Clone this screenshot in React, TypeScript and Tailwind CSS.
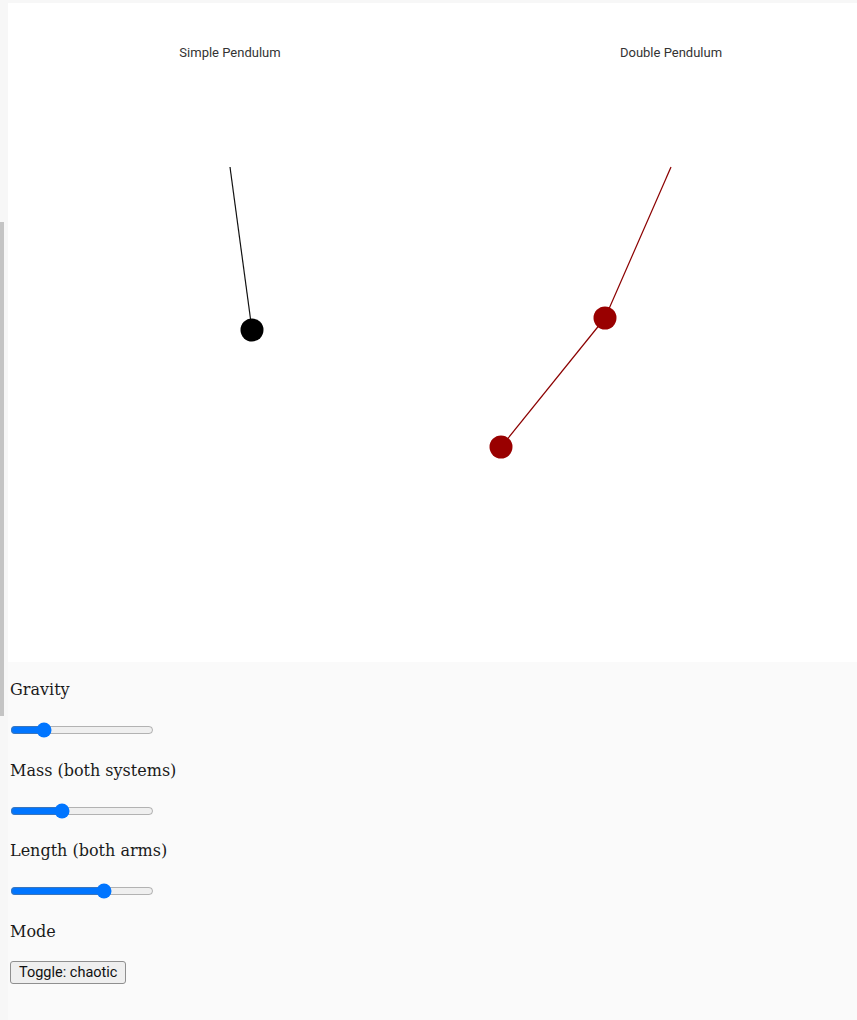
import { useState } from 'react';

const sliders = [
  { label: 'Gravity', value: 20 },
  { label: 'Mass (both systems)', value: 34 },
  { label: 'Length (both arms)', value: 67 },
];

function Canvas() {
  // svg x = page x - 8
  return (
    <div className="bg-white h-[659px] overflow-hidden">
      <svg width="880" height="659" className="block">
        <g fontFamily="Roboto, 'Liberation Sans', sans-serif" fontSize="13" fill="#333" textAnchor="middle">
          <text x="222" y="54">Simple Pendulum</text>
          <text x="663" y="54">Double Pendulum</text>
        </g>

        {/* simple */}
        <line x1="222" y1="164" x2="244" y2="327" stroke="#111" strokeWidth="1.2" />
        <circle cx="244" cy="327" r="11.5" fill="#000" />

        {/* double */}
        <line x1="663" y1="164" x2="597" y2="315" stroke="#8b0000" strokeWidth="1.2" />
        <line x1="597" y1="315" x2="493" y2="444" stroke="#8b0000" strokeWidth="1.2" />
        <circle cx="597" cy="315" r="11.5" fill="#990000" />
        <circle cx="493" cy="444" r="11.5" fill="#990000" />
      </svg>
    </div>
  );
}

export default function App() {
  const [chaotic, setChaotic] = useState(true);

  return (
    <div className="relative min-h-[1020px] bg-[#f7f7f7] pl-2 pt-[3px] font-['DejaVu_Serif',serif]">
      {/* scrollbar thumb at the left edge */}
      <div className="absolute left-0 top-[222px] w-[4px] h-[494px] bg-[#c4c4c4]" />

      <Canvas />

      <div className="bg-[#fafafa] pl-[2px] pt-[14px] pb-10 text-[#1a1a1a]">
        {sliders.map((s) => (
          <div key={s.label}>
            <div className="text-[16px] leading-[28px]">{s.label}</div>
            <div className="mt-[16px] mb-[16.5px] h-5 flex items-center">
              <input type="range" min={0} max={100} defaultValue={s.value} className="w-[144px] h-4 accent-[#0075ff]" />
            </div>
          </div>
        ))}

        <div className="text-[16px] leading-[28px]">Mode</div>
        <button
          onClick={() => setChaotic(!chaotic)}
          className="mt-[15px] h-[23px] px-[8px] bg-[#efefef] border border-[#8f8f8f] rounded-[3px] text-[14.5px] text-[#111] font-['Roboto','Liberation_Sans',sans-serif]"
        >
          Toggle: {chaotic ? 'chaotic' : 'calm'}
        </button>
      </div>
    </div>
  );
}
